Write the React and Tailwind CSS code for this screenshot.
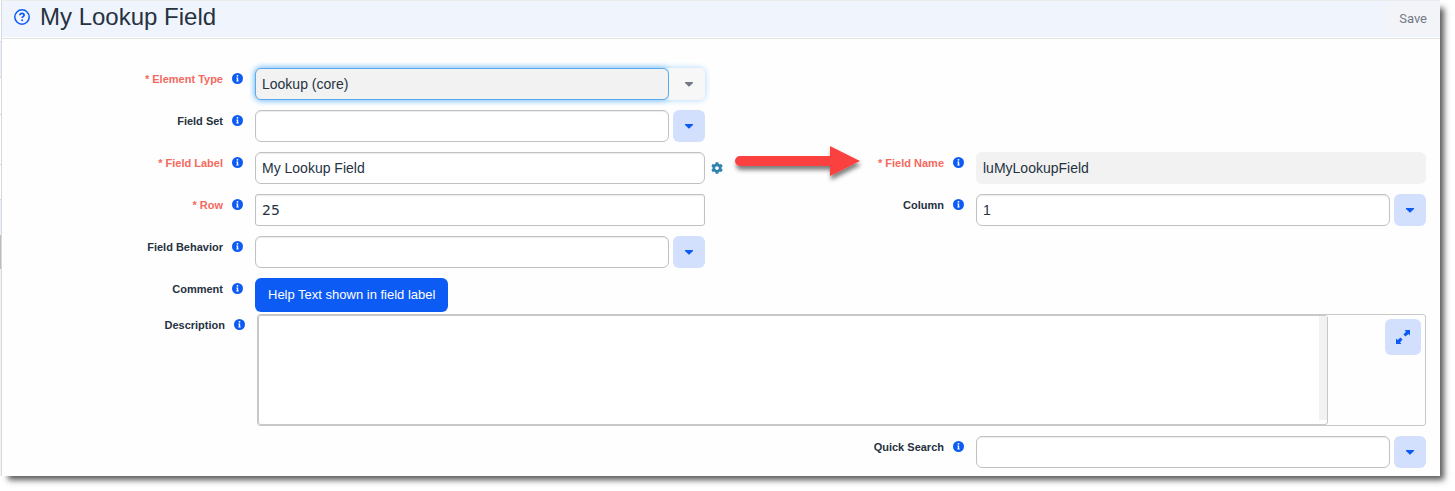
import { useRef } from "react";

function InfoIcon() {
  return (
    <svg viewBox="0 0 512 512" className="size-[11px] shrink-0" aria-hidden="true">
      <circle cx="256" cy="256" r="256" fill="#0d5bf5" />
      <path
        fill="#fff"
        d="M256 90a42 42 0 1 1 0 84 42 42 0 0 1 0-84zm56 290a12 12 0 0 1-12 12h-88a12 12 0 0 1-12-12v-24a12 12 0 0 1 12-12h12v-88h-12a12 12 0 0 1-12-12v-24a12 12 0 0 1 12-12h64a12 12 0 0 1 12 12v124h12a12 12 0 0 1 12 12v24z"
      />
    </svg>
  );
}

function FieldLabel({ htmlFor, required, children }) {
  return (
    <div className="flex h-[21px] items-center justify-end gap-[9px] pr-3">
      <label
        htmlFor={htmlFor}
        className={`text-[11px] leading-4 font-bold ${required ? "text-[#f4695e]" : "text-[#26323f]"}`}
      >
        {required ? "* " : ""}
        {children}
      </label>
      <InfoIcon />
    </div>
  );
}

const box =
  "block h-8 w-full min-w-0 border border-[#bfc1c4] bg-white px-1.5 text-sm text-[#26323f] outline-none";

function Combo({ id, value, active }) {
  const ref = useRef(null);
  return (
    <div className={`flex rounded-md ${active ? "shadow-[0_0_6px_#a9d6fa]" : "gap-1"}`}>
      <select
        id={id}
        ref={ref}
        defaultValue={value}
        className={`appearance-none rounded-md ${box} ${
          active ? "border-[#5aa9ec]! bg-[#f2f2f2]! shadow-[0_0_6px_#7cbff7]" : "shadow-[inset_0_1px_1px_#ebebeb]"
        }`}
      >
        <option>{value}</option>
      </select>
      <button
        type="button"
        aria-label="Show options"
        onClick={() => ref.current?.showPicker?.()}
        className={`flex h-8 shrink-0 items-center justify-center ${
          active
            ? "w-9 rounded-r-md bg-[#f7f7f7] pl-1 text-[#727b85]"
            : "w-8 rounded-md bg-[#d3e0fd] text-[#0d5bf5]"
        }`}
      >
        <svg viewBox="0 0 8 5" className="h-[5px] w-2" aria-hidden="true">
          <path fill="currentColor" d="M0 0h8v1L4.6 4.300a.8.8 0 0 1-1.2 0L0 1z" />
        </svg>
      </button>
    </div>
  );
}

export default function App() {
  return (
    <div className="bg-white pr-[15px] pb-[15px] font-['Liberation_Sans',Arial,sans-serif]">
      <div className="flex bg-[#fefefe] shadow-[6px_6px_6px_-2px_#000000a6]">
        <div className="flex w-0.5 shrink-0 flex-col border-r border-[#d9dadd] bg-[#f3f3f3]">
          <div className="h-[42px] border-b border-[#d5d8de] bg-white" />
          <div className="h-9 border-b border-[#d5d8de] bg-[#e9effc]" />
          <div className="h-[37px] border-b border-[#d5d8de] bg-white" />
          <div className="h-[50px] border-b border-[#d5d8de] bg-white" />
          <div className="h-[35px] border-b border-[#d5d8de] bg-white" />
          <div className="h-[35px] bg-[#e9effc]" />
          <div className="h-[34px] bg-[#bdbdbd]" />
        </div>
        <main className="min-w-0 flex-1">
          <header className="flex h-[39px] flex-col border-b border-[#e2e3e5]">
            <div className="flex h-[37px] items-center border-t border-[#ececec] bg-[#f0f4fd] pl-3">
              <a href="#help" aria-label="Help" className="mb-1">
                <svg viewBox="0 0 16 16" className="size-4" fill="none" stroke="#0d5bf5" aria-hidden="true">
                  <circle cx="8" cy="8" r="7.2" strokeWidth="1.5" />
                  <path d="M5.9 6.3c.1-1.2 1-1.9 2.1-1.9s2.1.7 2.1 1.8c0 1.400-2 1.500-2 2.900" strokeWidth="1.700" />
                  <circle cx="8.100" cy="11.300" r="1" fill="#0d5bf5" stroke="none" />
                </svg>
              </a>
              <h1 className="mb-1 ml-2.5 flex-1 text-2xl leading-8 text-[#26323f]">My Lookup Field</h1>
              <button
                type="button"
                className="h-8 rounded-l-md bg-[#f2f4f8] px-[13px] font-[Roboto,sans-serif] text-[13px] text-[#727b85]"
              >
                Save
              </button>
            </div>
          </header>

          <form className="pt-[29px] pb-2" onSubmit={(e) => e.preventDefault()}>
            <div className="grid grid-cols-[253px_minmax(0,1fr)_271px_minmax(0,1fr)] gap-y-2.5 pr-3.5">
              <FieldLabel htmlFor="type" required>Element Type</FieldLabel>
              <Combo id="type" value="Lookup (core)" active />
              <div className="col-span-2" />

              <FieldLabel htmlFor="set">Field Set</FieldLabel>
              <Combo id="set" value="" />
              <div className="col-span-2" />

              <FieldLabel htmlFor="label" required>Field Label</FieldLabel>
              <input id="label" defaultValue="My Lookup Field" className={`rounded-md ${box} shadow-[inset_0_1px_1px_#ebebeb]`} />
              <div className="flex items-start justify-between pl-1.5">
                <button type="button" aria-label="Field label settings" className="mt-2.5">
                  <svg viewBox="0 0 512 512" className="size-3" aria-hidden="true">
                    <path
                      fill="#2f83b0"
                      d="M487.400 315.700l-42.600-24.600c4.300-23.200 4.300-47 0-70.200l42.600-24.600c4.900-2.800 7.100-8.600 5.500-14-11.100-35.600-30-67.800-54.700-94.600-3.800-4.100-10-5.100-14.800-2.300L380.800 110c-17.900-15.400-38.500-27.300-60.800-35.100V25.800c0-5.600-3.900-10.500-9.400-11.700-36.700-8.200-74.300-7.800-109.200 0-5.500 1.200-9.400 6.100-9.400 11.700V75c-22.200 7.900-42.800 19.800-60.800 35.100L88.700 85.500c-4.900-2.800-11-1.900-14.800 2.300-24.700 26.700-43.600 58.900-54.700 94.600-1.700 5.400.6 11.200 5.500 14L67.300 221c-4.300 23.200-4.300 47 0 70.200l-42.600 24.600c-4.900 2.800-7.100 8.600-5.500 14 11.100 35.600 30 67.800 54.700 94.600 3.800 4.100 10 5.100 14.800 2.300l42.600-24.600c17.900 15.400 38.500 27.300 60.800 35.100v49.200c0 5.600 3.900 10.500 9.400 11.700 36.700 8.200 74.300 7.800 109.200 0 5.500-1.200 9.400-6.100 9.400-11.700v-49.200c22.200-7.900 42.800-19.800 60.800-35.100l42.600 24.600c4.900 2.800 11 1.900 14.800-2.300 24.700-26.700 43.600-58.900 54.700-94.600 1.500-5.500-.7-11.300-5.600-14.100zM256 336c-44.100 0-80-35.900-80-80s35.900-80 80-80 80 35.900 80 80-35.900 80-80 80z"
                    />
                  </svg>
                </button>
                <FieldLabel htmlFor="name" required>Field Name</FieldLabel>
                <svg
                  viewBox="0 0 136 44"
                  className="pointer-events-none absolute ml-4 -mt-2.5 h-11 w-[136px]"
                  aria-hidden="true"
                >
                  <defs>
                    <filter id="arrow-shadow" x="-10%" y="-30%" width="120%" height="170%">
                      <feDropShadow dx="1" dy="4" stdDeviation="2" floodColor="#000" floodOpacity="0.5" />
                    </filter>
                  </defs>
                  <path
                    fill="#fb4141"
                    filter="url(#arrow-shadow)"
                    d="M13 14h90V4l30 15-30 15V24H13a5 5 0 0 1 0-10z"
                  />
                </svg>
              </div>
              <input
                id="name"
                readOnly
                value="luMyLookupField"
                className="block h-8 w-full min-w-0 rounded-md bg-[#f2f2f2] px-[7px] text-sm text-[#26323f] outline-none"
              />

              <FieldLabel htmlFor="row" required>Row</FieldLabel>
              <input
                id="row"
                defaultValue="25"
                className={`rounded-[3px] font-['DejaVu_Sans',sans-serif] ${box} shadow-[inset_0_1px_1px_#ebebeb]`}
              />
              <FieldLabel htmlFor="column">Column</FieldLabel>
              <Combo id="column" value="1" />

              <FieldLabel htmlFor="behavior">Field Behavior</FieldLabel>
              <Combo id="behavior" value="" />
              <div className="col-span-2" />

              <FieldLabel htmlFor="comment">Comment</FieldLabel>
              <div>
                <button
                  id="comment"
                  type="button"
                  className="h-[34px] rounded-md bg-[#0d5bf5] px-[13px] text-[13px] text-white"
                >
                  Help Text shown in field label
                </button>
              </div>
            </div>

            <div className="mt-0.5 mb-2.5 grid grid-cols-[255px_minmax(0,1fr)] pr-3.5">
              <FieldLabel htmlFor="description">Description</FieldLabel>
              <div className="flex h-28 rounded-[3px] border border-[#c8c8c8]">
                <div className="flex min-w-0 flex-1 rounded-[3px] border border-[#c8c8c8] bg-white">
                  <textarea id="description" className="min-w-0 flex-1 resize-none outline-none" />
                  <div className="mb-1 w-2 bg-[#f2f2f2]" />
                </div>
                <div className="flex w-[97px] items-start justify-end p-1">
                  <button
                    type="button"
                    aria-label="Expand"
                    className="flex size-9 items-center justify-center rounded-md bg-[#d3e0fd]"
                  >
                    <svg viewBox="0 0 14 14" className="size-3.5" fill="#0d5bf5" aria-hidden="true">
                      <path d="M8.500 0H14v5.500l-1.600-1.500L9.500 6.500l-2-2L10 1.600z" />
                      <path d="M5.500 14H0V8.500l1.600 1.500L4.500 7.500l2 2L4 12.400z" />
                    </svg>
                  </button>
                </div>
              </div>
            </div>

            <div className="grid grid-cols-[253px_minmax(0,1fr)_271px_minmax(0,1fr)] pr-3.5">
              <div className="col-span-2" />
              <FieldLabel htmlFor="quick">Quick Search</FieldLabel>
              <Combo id="quick" value="" />
            </div>
          </form>
        </main>
      </div>
    </div>
  );
}
